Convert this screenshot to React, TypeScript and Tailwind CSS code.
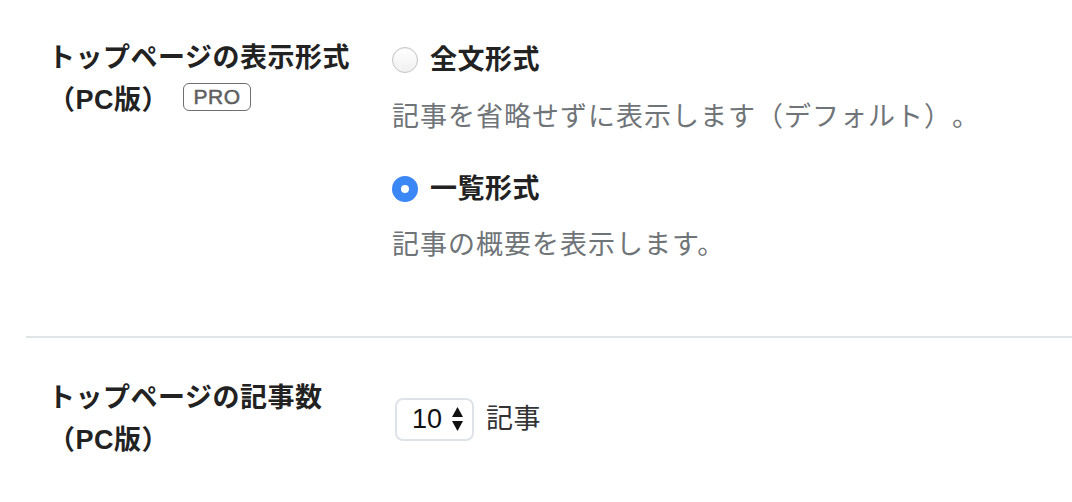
import React, { useState } from 'react';

const FONT = '"Liberation Sans", "Noto Sans CJK JP", sans-serif';

const Radio: React.FC<{ checked: boolean; onClick: () => void }> = ({ checked, onClick }) => (
  <button
    type="button"
    onClick={onClick}
    className={
      checked
        ? 'w-[26px] h-[26px] rounded-full bg-[#3b87f6] flex items-center justify-center shrink-0'
        : 'w-[26px] h-[26px] rounded-full border-[1.5px] border-[#c4c4c4] bg-gradient-to-b from-white to-[#f0f0f0] shadow-[inset_0_1px_1px_rgba(0,0,0,0.06)] shrink-0'
    }
  >
    {checked && <span className="block w-[8px] h-[8px] rounded-full bg-white" />}
  </button>
);

const App: React.FC = () => {
  const [mode, setMode] = useState<'full' | 'list'>('list');

  return (
    <div
      className="w-[1072px] h-[502px] bg-white text-[#222] pl-[26px] [text-spacing-trim:space-all]"
      style={{ fontFamily: FONT }}
    >
      {/* 表示形式 */}
      <div className="flex pt-[37px] pb-[70px] border-b-2 border-[#dfe4e7]">
        <div className="w-[366px] pl-[22px] shrink-0 text-[27px] leading-[42px] font-bold tracking-[0.5px]">
          トップページの表示形式
          <br />
          <span className="inline-flex items-center">
            （PC版）
            <span className="ml-[14px] mb-[7px] inline-flex items-center justify-center h-[28px] w-[68px] rounded-[6px] border-[1.5px] border-[#6e6e6e] text-[#5f5f5f] text-[21px] font-normal [-webkit-text-stroke:0.5px_#5f5f5f] leading-none tracking-[0.5px]">
              PRO
            </span>
          </span>
        </div>
        <div className="pt-[2px] flex flex-col">
          <label className="flex items-center gap-[12px] h-[42px] cursor-pointer" onClick={() => setMode('full')}>
            <Radio checked={mode === 'full'} onClick={() => setMode('full')} />
            <span className="text-[27px] font-bold tracking-[0.5px]">全文形式</span>
          </label>
          <p className="mt-[15px] text-[27px] leading-[42px] text-[#6f7478] tracking-[1px]">
            記事を省略せずに表示します（デフォルト）。
          </p>
          <label className="mt-[30px] flex items-center gap-[12px] h-[42px] cursor-pointer" onClick={() => setMode('list')}>
            <Radio checked={mode === 'list'} onClick={() => setMode('list')} />
            <span className="text-[27px] font-bold tracking-[0.5px]">一覧形式</span>
          </label>
          <p className="mt-[14px] text-[27px] leading-[42px] text-[#6f7478] tracking-[1px]">
            記事の概要を表示します。
          </p>
        </div>
      </div>

      {/* 記事数 */}
      <div className="flex items-center pt-[39px]">
        <div className="w-[366px] pl-[22px] shrink-0 text-[27px] leading-[42px] font-bold tracking-[0.5px]">
          トップページの記事数
          <br />
          （PC版）
        </div>
        <div className="ml-[3px] flex items-center gap-[12px]">
          <div className="flex items-center w-[79px] h-[43px] pl-[15px] pr-[8px] rounded-[8px] border-2 border-[#dde3e8] bg-white">
            <span className="text-[27px] leading-none text-[#111]">10</span>
            <svg className="ml-auto" width="13" height="26" viewBox="0 0 13 26">
              <path d="M6.5 1 L12 11 L1 11 Z" fill="#111" />
              <path d="M6.5 25 L12 15 L1 15 Z" fill="#111" />
            </svg>
          </div>
          <span className="text-[27px] text-[#333] tracking-[0.5px]">記事</span>
        </div>
      </div>
    </div>
  );
};

export default App;
